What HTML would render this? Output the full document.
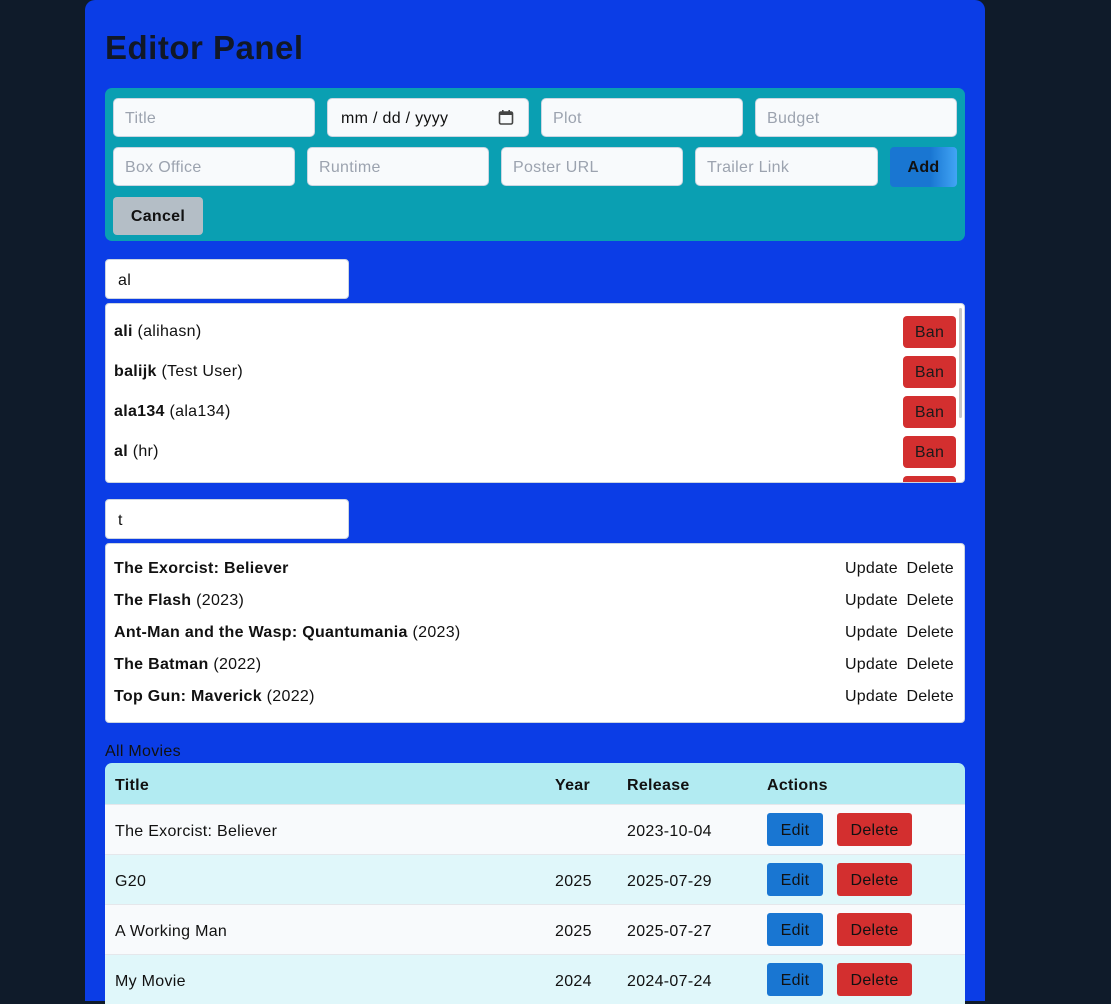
<!DOCTYPE html>
<html><head><meta charset="utf-8"><style>
*{box-sizing:border-box;margin:0;padding:0}
html,body{width:1111px;height:1001px}
body{background:#0f1b2a;font-family:"Liberation Sans",sans-serif;color:#111;position:relative;overflow:hidden;font-size:16px;letter-spacing:0.3px}
.a{position:absolute}
.panel{left:85px;top:0;width:900px;height:1001px;background:#0b3de6;border-radius:10px 10px 0 0}
h1{position:absolute;left:105px;top:29px;font-size:33px;font-weight:bold;color:#111827;letter-spacing:0.5px}
.form{left:105px;top:88px;width:860px;height:153px;background:#0a9fb2;border-radius:7px}
.in{position:absolute;background:#f8fafc;border:1px solid #cbd5e1;border-radius:5px;color:#9ca3af;font-size:16px;padding-left:11px;padding-top:2px;display:flex;align-items:center;height:39px}
.btn{position:absolute;display:flex;align-items:center;justify-content:center;border-radius:4px;padding-top:2px}
.white{background:#fff;border:1px solid #cbd5e1;border-radius:4px}
.row{position:absolute;left:114px;font-size:16px}
.ban{position:absolute;left:903px;width:53px;height:32px;background:#d32f2f;border-radius:4px;display:flex;align-items:center;justify-content:center;font-size:16px;color:#1a1a1a;padding-top:2px}
.ud{position:absolute;left:845px;font-size:16px;word-spacing:4px;letter-spacing:0.2px}
.tr{position:absolute;left:105px;width:860px;height:50px;border-top:1px solid #e5e7eb}
.tr span{position:absolute;top:18px;font-size:16px}
.e{position:absolute;left:662px;top:8px;width:56px;height:33px;background:#1976d2;border-radius:3px;display:flex;align-items:center;justify-content:center;padding-top:2px}
.d{position:absolute;left:732px;top:8px;width:75px;height:33px;background:#d32f2f;border-radius:3px;display:flex;align-items:center;justify-content:center;padding-top:2px}
</style></head><body>
<div class="a panel"></div>
<h1>Editor Panel</h1>
<div class="a form"></div>
<div class="in" style="left:113px;top:98px;width:202px">Title</div>
<div class="in" style="left:327px;top:98px;width:202px;color:#111;padding-left:13px">mm / dd / yyyy
<svg class="a" style="left:170px;top:10px" width="16" height="17" viewBox="0 0 16 17"><rect x="1.5" y="3" width="13" height="12" rx="1.5" fill="none" stroke="#444" stroke-width="1.6"/><rect x="1.5" y="3" width="13" height="3" fill="#444"/><rect x="4" y="1" width="1.6" height="3" fill="#444"/><rect x="10.4" y="1" width="1.6" height="3" fill="#444"/></svg></div>
<div class="in" style="left:541px;top:98px;width:202px">Plot</div>
<div class="in" style="left:755px;top:98px;width:202px">Budget</div>
<div class="in" style="left:113px;top:147px;width:182px">Box Office</div>
<div class="in" style="left:307px;top:147px;width:182px">Runtime</div>
<div class="in" style="left:501px;top:147px;width:182px">Poster URL</div>
<div class="in" style="left:695px;top:147px;width:183px">Trailer Link</div>
<div class="btn" style="left:890px;top:147px;width:67px;height:40px;background:linear-gradient(90deg,#1976d2 60%,#42a5f5);font-weight:bold">Add</div>
<div class="btn" style="left:113px;top:197px;width:90px;height:38px;background:#b4bec6;font-weight:bold">Cancel</div>

<div class="a white" style="left:105px;top:259px;width:244px;height:40px;padding:12px 12px 0">al</div>
<div class="a white" style="left:105px;top:303px;width:860px;height:180px;overflow:hidden">
<div class="a" style="right:2px;top:4px;width:3px;height:110px;background:#c8c8c8;border-radius:2px"></div>
</div>
<div class="row" style="top:323px"><b>ali</b> (alihasn)</div>
<div class="row" style="top:363px"><b>balijk</b> (Test User)</div>
<div class="row" style="top:403px"><b>ala134</b> (ala134)</div>
<div class="row" style="top:443px"><b>al</b> (hr)</div>
<div class="ban" style="top:316px">Ban</div>
<div class="ban" style="top:356px">Ban</div>
<div class="ban" style="top:396px">Ban</div>
<div class="ban" style="top:436px">Ban</div>
<div class="a" style="left:903px;top:476px;width:53px;height:6px;background:#d32f2f;border-radius:4px 4px 0 0"></div>

<div class="a white" style="left:105px;top:499px;width:244px;height:40px;padding:12px 12px 0">t</div>
<div class="a white" style="left:105px;top:543px;width:860px;height:180px"></div>
<div class="row" style="top:560px"><b>The Exorcist: Believer</b></div>
<div class="row" style="top:592px"><b>The Flash</b> (2023)</div>
<div class="row" style="top:624px"><b>Ant-Man and the Wasp: Quantumania</b> (2023)</div>
<div class="row" style="top:656px"><b>The Batman</b> (2022)</div>
<div class="row" style="top:688px"><b>Top Gun: Maverick</b> (2022)</div>
<div class="ud" style="top:560px">Update Delete</div>
<div class="ud" style="top:592px">Update Delete</div>
<div class="ud" style="top:624px">Update Delete</div>
<div class="ud" style="top:656px">Update Delete</div>
<div class="ud" style="top:688px">Update Delete</div>

<div class="a" style="left:105px;top:743px;font-size:16px">All Movies</div>
<div class="a" style="left:105px;top:763px;width:860px;height:41px;background:#b2ebf2;border-radius:7px 7px 0 0;font-weight:bold">
<span class="a" style="left:10px;top:14px">Title</span><span class="a" style="left:450px;top:14px">Year</span><span class="a" style="left:522px;top:14px">Release</span><span class="a" style="left:662px;top:14px">Actions</span></div>
<div class="tr" style="top:804px;background:#f8fafc"><span style="left:10px">The Exorcist: Believer</span><span style="left:522px">2023-10-04</span><div class="e">Edit</div><div class="d">Delete</div></div>
<div class="tr" style="top:854px;background:#e0f7fa"><span style="left:10px">G20</span><span style="left:450px">2025</span><span style="left:522px">2025-07-29</span><div class="e">Edit</div><div class="d">Delete</div></div>
<div class="tr" style="top:904px;background:#f8fafc"><span style="left:10px">A Working Man</span><span style="left:450px">2025</span><span style="left:522px">2025-07-27</span><div class="e">Edit</div><div class="d">Delete</div></div>
<div class="tr" style="top:954px;background:#e0f7fa"><span style="left:10px">My Movie</span><span style="left:450px">2024</span><span style="left:522px">2024-07-24</span><div class="e">Edit</div><div class="d">Delete</div></div>
</body></html>
